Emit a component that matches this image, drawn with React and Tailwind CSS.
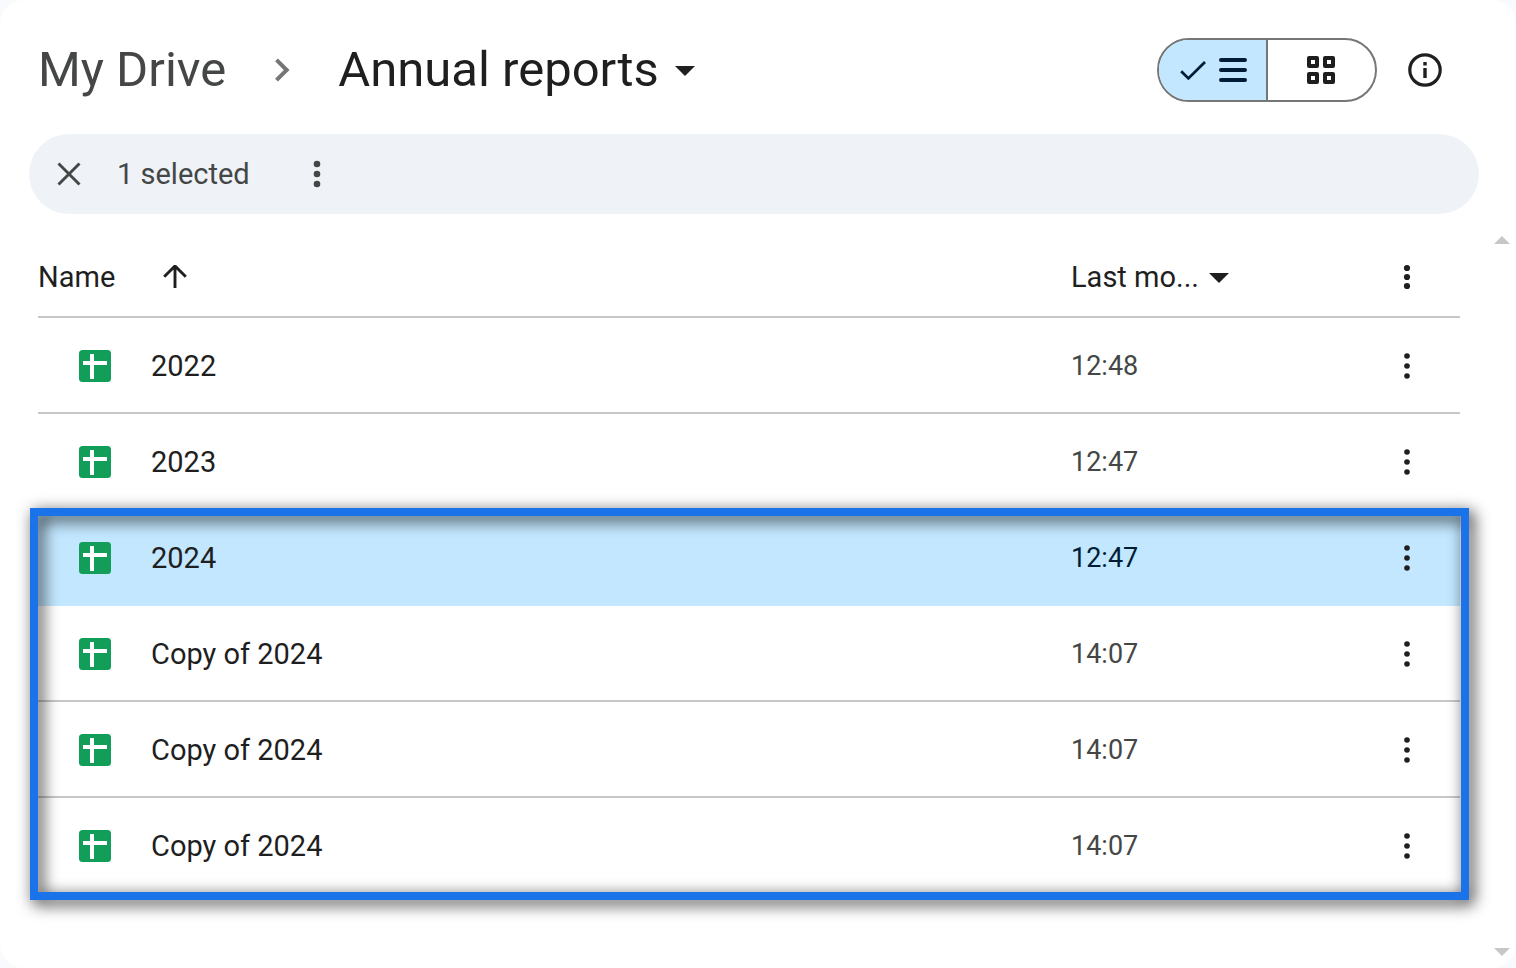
import { useState } from "react";

const FILES = [
  { id: 1, name: "2022", modified: "12:48" },
  { id: 2, name: "2023", modified: "12:47" },
];

const HIGHLIGHTED = [
  { id: 3, name: "2024", modified: "12:47" },
  { id: 4, name: "Copy of 2024", modified: "14:07" },
  { id: 5, name: "Copy of 2024", modified: "14:07" },
  { id: 6, name: "Copy of 2024", modified: "14:07" },
];

function Dots({ gap = 10, r = 3 }) {
  return (
    <svg width="32" height="32" viewBox="0 0 32 32" fill="currentColor" aria-hidden="true">
      <circle cx="16" cy={16 - gap} r={r} />
      <circle cx="16" cy="16" r={r} />
      <circle cx="16" cy={16 + gap} r={r} />
    </svg>
  );
}

function Caret() {
  return (
    <svg width="20" height="12" viewBox="0 0 20 12" fill="currentColor" className="shrink-0" aria-hidden="true">
      <path d="M0 2h20L10 12z" />
    </svg>
  );
}

function SheetIcon() {
  return (
    <svg width="32" height="32" viewBox="0 0 32 32" className="shrink-0" aria-hidden="true">
      <rect width="32" height="32" rx="3.5" fill="#129d58" />
      <path d="M11 4h4v7h13v4H15v14h-4V15H4v-4h7z" fill="#fff" />
    </svg>
  );
}

function FileRow({ file, selected, line, onSelect }) {
  const cell = line ? "h-24 p-0 shadow-[inset_0_-2px_#c7c7c7]" : "h-24 p-0";
  return (
    <tr className={selected ? "bg-[#c2e7ff]" : ""} onClick={() => onSelect(file.id)} aria-selected={selected}>
      <td className={cell}>
        <div className="flex items-center gap-10 pl-[41px] font-[450]">
          <SheetIcon />
          <span>{file.name}</span>
        </div>
      </td>
      <td className={`${cell} text-[27px] ${selected ? "text-[#001d35]" : "text-[#444746]"}`}>{file.modified}</td>
      <td className={cell}>
        <button type="button" aria-label={`More actions for ${file.name}`} className="mx-auto block">
          <Dots r={2.8} />
        </button>
      </td>
    </tr>
  );
}

export default function App() {
  const [selected, setSelected] = useState(3);
  const [view, setView] = useState("list");

  return (
    <div className="min-h-screen bg-[#f8fafd] font-[Roboto,sans-serif] text-[29px] leading-9 text-[#1f1f1f]">
      <main className="flex min-h-screen flex-col rounded-3xl bg-white">
        <header className="flex items-center justify-between pt-[38px] pr-[73px] pb-8 pl-[38px]">
          <nav className="flex items-center text-[49px] leading-[64px]" aria-label="Breadcrumb">
            <a href="#" className="text-[#444746]">My Drive</a>
            <svg width="16" height="24" viewBox="0 0 16 24" className="mx-12 shrink-0" fill="none" stroke="#747775" strokeWidth="4" aria-hidden="true">
              <path d="M2.5 1.8 12.7 12 2.5 22.2" />
            </svg>
            <button type="button" className="flex items-center gap-4">
              Annual reports
              <Caret />
            </button>
          </nav>
          <div className="flex items-center gap-[30px]">
            <div className="flex h-16 w-[220px] overflow-hidden rounded-full border-2 border-[#747775]">
              <button
                type="button"
                aria-label="List layout"
                aria-pressed={view === "list"}
                onClick={() => setView("list")}
                className="flex w-[109px] items-center justify-center gap-3 border-r-2 border-[#747775] bg-[#c2e7ff] text-[#001d35]"
              >
                <svg width="28" height="28" viewBox="0 0 28 28" fill="none" stroke="currentColor" strokeWidth="2.8" aria-hidden="true">
                  <path d="m2.2 15.2 7.2 7.2L26 6" />
                </svg>
                <svg width="28" height="28" viewBox="0 0 28 28" stroke="currentColor" strokeWidth="4" strokeLinecap="round" aria-hidden="true">
                  <path d="M2 4h24M2 14h24M2 24h24" />
                </svg>
              </button>
              <button
                type="button"
                aria-label="Grid layout"
                aria-pressed={view === "grid"}
                onClick={() => setView("grid")}
                className="flex flex-1 items-center justify-center pr-px"
              >
                <svg width="28" height="28" viewBox="0 0 28 28" fill="none" stroke="currentColor" strokeWidth="4" strokeLinejoin="round" aria-hidden="true">
                  <path d="M2 2h8v8H2zM18 2h8v8h-8zM2 18h8v8H2zM18 18h8v8h-8z" />
                </svg>
              </button>
            </div>
            <button type="button" aria-label="View details">
              <svg width="36" height="36" viewBox="0 0 36 36" fill="none" stroke="currentColor" strokeWidth="3.2" aria-hidden="true">
                <circle cx="18" cy="18" r="15.2" />
                <path d="M18 16v10M18 10v3.4" strokeWidth="3.4" />
              </svg>
            </button>
          </div>
        </header>

        <div className="mr-[37px] ml-[29px] flex h-20 items-center rounded-full bg-[#eff3f8] pl-7 text-[#444746]">
          <button type="button" aria-label="Clear selection">
            <svg width="24" height="24" viewBox="0 0 24 24" fill="none" stroke="currentColor" strokeWidth="2.9" aria-hidden="true">
              <path d="m1.5 1.5 21 21m0-21-21 21" />
            </svg>
          </button>
          <span className="ml-9 w-[184px]">1 selected</span>
          <button type="button" aria-label="More actions">
            <Dots r={3.3} />
          </button>
        </div>

        <section className="flex flex-1">
          <div className="min-w-0 flex-1 pt-6 pb-[74px] pl-[38px]">
            <table className="w-full table-fixed border-separate border-spacing-0 text-left">
              <thead>
                <tr>
                  <th className="h-20 p-0 pb-0.5 font-[450] shadow-[inset_0_-2px_#c7c7c7]">
                    <button type="button" className="flex items-center gap-12">
                      Name
                      <svg width="24" height="24" viewBox="0 0 24 24" fill="none" stroke="currentColor" strokeWidth="2.9" aria-hidden="true">
                        <path d="M12 23V1M1.2 11.8 12 1l10.8 10.8" />
                      </svg>
                    </button>
                  </th>
                  <th className="w-[283px] p-0 pb-0.5 font-[450] shadow-[inset_0_-2px_#c7c7c7]">
                    <button type="button" className="flex items-center gap-2.5" aria-label="Last modified">
                      Last mo...
                      <Caret />
                    </button>
                  </th>
                  <th className="w-[106px] p-0 pb-0.5 shadow-[inset_0_-2px_#c7c7c7]">
                    <button type="button" aria-label="Sort options" className="mx-auto block">
                      <Dots gap={9} r={3.1} />
                    </button>
                  </th>
                </tr>
              </thead>
              <tbody>
                {FILES.map((f, i) => (
                  <FileRow key={f.id} file={f} selected={selected === f.id} line={i === 0} onSelect={setSelected} />
                ))}
              </tbody>
              {/* framed group */}
              <tbody className="relative after:pointer-events-none after:absolute after:-top-0.5 after:-right-[9px] after:-bottom-1.5 after:-left-2 after:border-8 after:border-[#1a73e8] after:drop-shadow-[4px_4px_8px_rgba(0,0,0,0.9)] after:content-['']">
                {HIGHLIGHTED.map((f, i) => (
                  <FileRow key={f.id} file={f} selected={selected === f.id} line={i === 1 || i === 2} onSelect={setSelected} />
                ))}
              </tbody>
            </table>
          </div>
          <div className="flex w-14 flex-col items-end justify-between pt-[22px] pr-1.5 pb-3 text-[#c7c7c7]" aria-hidden="true">
            <svg width="16" height="8" viewBox="0 0 16 8" fill="currentColor"><path d="M8 0 16 8H0z" /></svg>
            <svg width="16" height="8" viewBox="0 0 16 8" fill="currentColor"><path d="M0 0h16L8 8z" /></svg>
          </div>
        </section>
      </main>
    </div>
  );
}
